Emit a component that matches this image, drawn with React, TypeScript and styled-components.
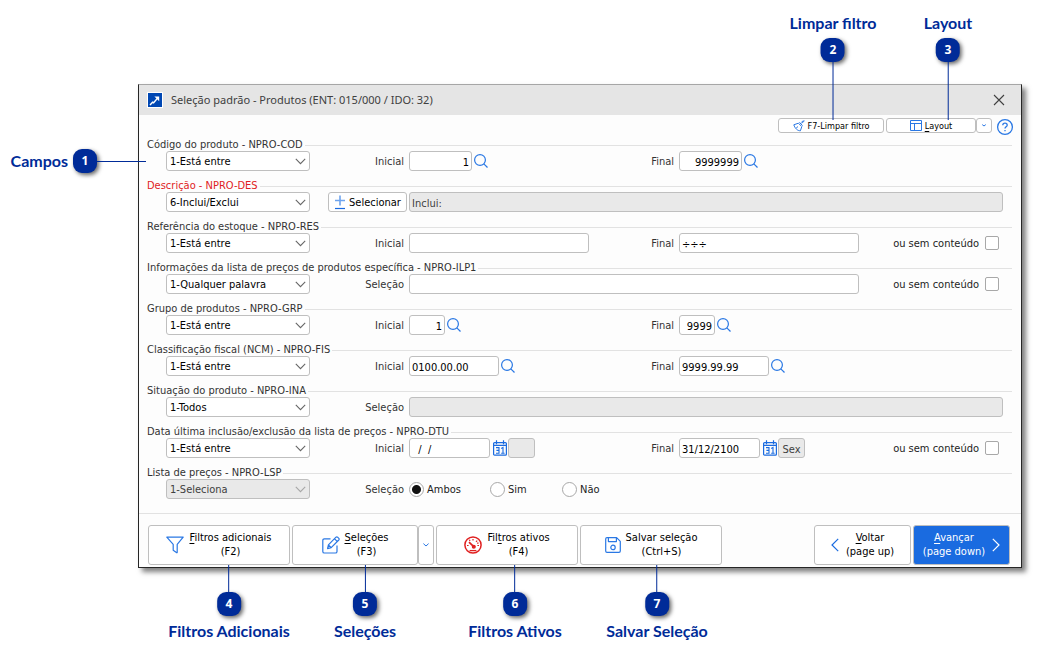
import React, { useId } from 'react';
import styled, { createGlobalStyle, css } from 'styled-components';

const navy = '#002b98';
const blue = '#1a6be0';
const edge = '#bfbfbf';

const GlobalStyle = createGlobalStyle`
  *, *::before, *::after { box-sizing: border-box; }
  body {
    margin: 0;
    background: #ffffff;
    color: #1c1c1c;
    font: 11px/14px 'DejaVu Sans Condensed', 'DejaVu Sans', sans-serif;
  }
  button, input, select { font: inherit; color: inherit; margin: 0; }
  u { text-underline-offset: 2px; }
`;

const Page = styled.main`
  min-width: 960px;
  padding: 84px 23px 90px 138px;
`;

const Dialog = styled.section`
  background: #fdfdfd;
  border: 1px solid #262626;
  border-top-color: #a6a6a6;
  box-shadow: 4px 4px 5px rgba(0, 0, 0, 0.5);
`;

const TitleBar = styled.header`
  display: flex;
  align-items: center;
  gap: 8px;
  height: 30px;
  padding: 0 16px 0 8px;
  background: #e5e5e5;
`;

const Title = styled.h1`
  flex: 1;
  margin: 0;
  font: 400 11px/16px 'Noto Sans', sans-serif;
  color: #404040;
`;

const PlainButton = styled.button`
  display: flex;
  padding: 0;
  border: 0;
  background: none;
`;

const Toolbar = styled.div`
  display: flex;
  align-items: flex-start;
  justify-content: flex-end;
  height: 23px;
  padding: 3px 7px 0 8px;
`;

const Anchor = styled.div`
  position: relative;
  display: flex;
`;

const SmallButton = styled.button<{ $width: number; $gap?: number }>`
  display: flex;
  align-items: center;
  justify-content: center;
  gap: 3px;
  width: ${p => p.$width}px;
  height: 15px;
  margin-right: ${p => p.$gap ?? 0}px;
  padding: 0;
  border: 1px solid ${edge};
  border-radius: 3px;
  background: #ffffff;
  font-size: 9px;
  line-height: 12px;
  color: #000000;
`;

const Group = styled.div`
  position: relative;
  height: 41px;
  padding-left: 8px;
`;

const GroupTitle = styled.div<{ $alert?: boolean }>`
  display: flex;
  align-items: center;
  gap: 2px;
  padding-right: 9px;
  line-height: 13px;
  color: ${p => (p.$alert ? '#e01b24' : '#333333')};
  &::after {
    content: '';
    flex: 1;
    height: 1px;
    margin-top: 2px;
    background: #e2e2e2;
  }
`;

const Row = styled.div`
  display: grid;
  grid-template-columns: 144px 99px 210px 60px 180px 1fr;
  align-items: center;
  height: 20px;
  padding: 0 18px 0 19px;
`;

const SelectBox = styled.div`
  position: relative;
  display: flex;
  svg {
    position: absolute;
    right: 4px;
    top: 7px;
    pointer-events: none;
  }
  select:disabled + svg { opacity: 0.5; }
`;

const Select = styled.select`
  appearance: none;
  width: 100%;
  height: 20px;
  padding: 2px 18px 0 3px;
  border: 1px solid ${edge};
  border-radius: 3px;
  background: #ffffff;
  color: #000000;
  &:disabled { background: #e9e9e9; color: #404040; opacity: 1; }
`;

const Label = styled.label`
  padding: 1px 5px 0 0;
  text-align: right;
  color: #333333;
`;

const Cell = styled.div<{ $span?: number }>`
  display: flex;
  align-items: center;
  grid-column: span ${p => p.$span ?? 1};
`;

const Input = styled.input<{ $width?: number; $right?: boolean }>`
  width: ${p => (p.$width ? `${p.$width}px` : '100%')};
  height: 20px;
  padding: 2px 2px 0;
  border: 1px solid ${edge};
  border-radius: 3px;
  background: #ffffff;
  color: #000000;
  text-align: ${p => (p.$right ? 'right' : 'left')};
  &:disabled { background: #e9e9e9; color: #404040; }
`;

const DayBox = styled(Input)`
  text-align: center;
`;

const IconButton = styled(PlainButton)`
  margin: 0 0 0 2px;
`;

const CalendarButton = styled(PlainButton)`
  margin: 0 1px 0 3px;
`;

const PickCell = styled(Cell)`
  padding-left: 18px;
`;

const PickButton = styled.button`
  display: flex;
  align-items: center;
  justify-content: center;
  gap: 3px;
  width: 79px;
  height: 20px;
  padding: 1px 0 0;
  border: 1px solid ${edge};
  border-radius: 3px;
  background: #ffffff;
  color: #000000;
`;

const EmptyOption = styled.label`
  display: flex;
  align-items: center;
  justify-content: flex-end;
  gap: 6px;
  grid-column: 6;
  padding-right: 4px;
  span { padding-top: 2px; }
`;

const Checkbox = styled.input`
  appearance: none;
  width: 14px;
  height: 14px;
  border: 1px solid #a8a8a8;
  border-radius: 2px;
  background: #ffffff;
`;

const RadioLabel = styled.label<{ $width: number }>`
  display: flex;
  align-items: center;
  gap: 3px;
  width: ${p => p.$width}px;
  span { padding-top: 2px; }
`;

const Radio = styled.input`
  appearance: none;
  flex: none;
  width: 15px;
  height: 15px;
  border: 1px solid #a8a8a8;
  border-radius: 50%;
  background: #ffffff;
  &:checked { background: radial-gradient(circle, #111111 4px, #ffffff 5px); }
`;

const Footer = styled.footer`
  display: flex;
  gap: 2px;
  margin-top: 6px;
  padding: 11px 11px 2px 9px;
  border-top: 1px solid #e2e2e2;
`;

const ActionButton = styled.button<{ $width: number; $primary?: boolean; $gap?: number }>`
  display: flex;
  align-items: center;
  justify-content: center;
  gap: ${p => p.$gap ?? 5}px;
  width: ${p => p.$width}px;
  height: 40px;
  padding: 0;
  border: 1px solid ${edge};
  border-radius: 3px;
  background: #ffffff;
  text-align: center;
  color: #000000;
  ${p => p.$primary && css`
    background: ${blue};
    color: #ffffff;
  `}
`;

const Navigation = styled.div`
  display: flex;
  gap: 2px;
  margin-left: auto;
`;

const CalloutBox = styled.div<{ $side: 'top' | 'bottom' | 'left'; $at: number }>`
  position: absolute;
  z-index: 1;
  display: flex;
  align-items: center;
  pointer-events: none;
  ${p => p.$side === 'top' && css`
    flex-direction: column;
    bottom: 13px;
    left: ${p.$at}px;
    transform: translateX(-50%);
  `}
  ${p => p.$side === 'bottom' && css`
    flex-direction: column-reverse;
    top: 100%;
    left: ${p.$at}px;
    transform: translateX(-50%);
  `}
  ${p => p.$side === 'left' && css`
    right: 100%;
    top: ${p.$at}px;
    margin-right: -7px;
  `}
`;

const CalloutText = styled.span<{ $side: string }>`
  margin: ${p => (p.$side === 'left' ? '0 5px 0 0' : p.$side === 'top' ? '0 0 5px' : '5px 0 0')};
  font: 700 16px/20px Lato, sans-serif;
  white-space: nowrap;
  color: ${navy};
`;

const Badge = styled.b`
  width: 24px;
  height: 24px;
  border-radius: 9px;
  background: ${navy};
  box-shadow: 2px 2px 4px rgba(0, 0, 0, 0.6);
  font: 700 12px/24px 'Noto Sans', sans-serif;
  text-align: center;
  color: #ffffff;
`;

const Leader = styled.i<{ $side: string }>`
  width: ${p => (p.$side === 'left' ? 49 : 1)}px;
  height: ${p => (p.$side === 'left' ? 1 : p.$side === 'top' ? 58 : 27)}px;
  background: ${navy};
`;

type Side = 'top' | 'bottom' | 'left';

function Callout({ n, text, side, at }: { n: number; text: string; side: Side; at: number }) {
  return (
    <CalloutBox $side={side} $at={at}>
      <CalloutText $side={side}>{text}</CalloutText>
      <Badge>{n}</Badge>
      <Leader $side={side} />
    </CalloutBox>
  );
}

const stroke = { fill: 'none', stroke: '#2a78e4', strokeWidth: 1.2 } as const;

const SearchIcon = () => (
  <svg width="14" height="14" viewBox="0 0 14 14" {...stroke}>
    <circle cx="6" cy="6" r="5.4" />
    <path d="M9.8 9.8 13.5 13.5" />
  </svg>
);

const CalendarIcon = () => (
  <svg width="14" height="16" viewBox="0 0 14 16" {...stroke} stroke={blue}>
    <rect x="0.6" y="2.6" width="12.8" height="12.6" rx="1" />
    <path d="M0.5 5.4h13M3.5 0.2v4M10.5 0.2v4" />
    <path d="M3 7.6h3v5.6H3M3.4 10.4H6M8.2 8.4 10 7.4v5.8M8.2 13.2h3.4" strokeWidth="1.1" />
  </svg>
);

const Chevron = () => (
  <svg width="11" height="7" viewBox="0 0 11 7" fill="none" stroke="#666666" strokeWidth="1.1">
    <path d="M0.8 0.9 5.5 5.6 10.2 0.9" />
  </svg>
);

const SmallChevron = () => (
  <svg width="6" height="4" viewBox="0 0 6 4" {...stroke} strokeWidth="1">
    <path d="M0.4 0.6 3 3 5.6 0.6" />
  </svg>
);

const TinyChevron = () => (
  <svg width="4" height="3" viewBox="0 0 4 3" {...stroke} strokeWidth="1">
    <path d="M0.2 0.6 2 2 3.8 0.6" />
  </svg>
);

const AppIcon = () => (
  <svg width="16" height="16" viewBox="0 0 16 16">
    <rect width="16" height="16" fill="#ffffff" />
    <rect x="1" y="1" width="14" height="14" fill="#0047b3" />
    <path d="M3 13 5.6 10.2 6.6 10.8 11 5.6" fill="none" stroke="#ffffff" strokeWidth="1.4" />
    <path d="M7.4 4.6H12.2V9.2Z" fill="#ffffff" />
  </svg>
);

const CloseIcon = () => (
  <svg width="12" height="12" viewBox="0 0 12 12" stroke="#404040" strokeWidth="1.1">
    <path d="M1 1 11 11M11 1 1 11" />
  </svg>
);

const BrushIcon = () => (
  <svg width="12" height="12" viewBox="0 0 12 12" {...stroke} strokeWidth="1">
    <path d="M11.6 0.6 8.8 3.4M10.4 0.4 8.2 2.6M6.4 2.4 9.6 5.6M5.4 3.2 8.8 6.6 7.4 10.8C4.4 10.8 2 8.4 0.8 4.8ZM3.2 8 5 6.6" />
  </svg>
);

const LayoutIcon = () => (
  <svg width="12" height="11" viewBox="0 0 12 11" {...stroke} strokeWidth="1">
    <path d="M0.5 0.5h11v10H0.5zM0.5 3.5h11M4.5 3.5v7" />
  </svg>
);

const HelpIcon = () => (
  <svg width="18" height="18" viewBox="0 0 18 18" {...stroke} strokeWidth="1.3">
    <circle cx="9" cy="9" r="7.4" />
    <path d="M6.8 7.3C6.8 5.9 7.7 5.2 9 5.2s2.2.8 2.2 2c0 1.6-2.2 1.7-2.2 3.4M9 11.9v1.4" />
  </svg>
);

const PlusMinusIcon = () => (
  <svg width="12" height="15" viewBox="0 0 12 15" {...stroke} strokeWidth="1.2">
    <path d="M1 5.5h10M6 0.5v10" stroke="#6ea4ee" strokeWidth="1.6" />
    <path d="M1 13.5h10" stroke={blue} />
  </svg>
);

const FunnelIcon = () => (
  <svg width="18" height="18" viewBox="0 0 18 18" {...stroke} strokeLinejoin="round">
    <path d="M0.8 1.2H17.2L11.2 8.4V16.2Q11.2 17 10.4 16.6L7.2 14.2V8.4Z" />
  </svg>
);

const EditIcon = () => (
  <svg width="18" height="18" viewBox="0 0 18 18" {...stroke} strokeLinejoin="round">
    <path d="M8.5 2.8H2.4Q0.8 2.8 0.8 4.4V15.4Q0.8 17 2.4 17H13.4Q15 17 15 15.4V9.6" />
    <path d="M5.6 12.6 6.4 8.8 14 1.2Q14.8 0.5 15.6 1.2L16.8 2.4Q17.5 3.2 16.8 4L9.2 11.6ZM12.6 2.8 15.4 5.6M6.4 8.8 9.2 11.6" />
  </svg>
);

const GaugeIcon = () => (
  <svg width="18" height="18" viewBox="0 0 18 18" fill="none" stroke="#e02020" strokeWidth="1.5">
    <circle cx="9" cy="9" r="8.1" />
    <path d="M5 6.2 9.2 10.2" strokeWidth="1.8" />
    <circle cx="9.8" cy="10.8" r="1.3" fill="#e02020" />
    <path d="M5.6 14.6h6.8" strokeWidth="1.3" />
    <path d="M3 9.5h1.6M13.4 9.5H15M9 3v1.6M12 5.8 13.2 4.6M5.4 3.8l.6 1.2M13.2 7.4l1.3-.5" strokeWidth="1.2" />
  </svg>
);

const SaveIcon = () => (
  <svg width="16" height="16" viewBox="0 0 16 16" {...stroke} strokeLinejoin="round">
    <path d="M2 0.7H11.6L15.3 4.4V14Q15.3 15.3 14 15.3H2Q0.7 15.3 0.7 14V2Q0.7 0.7 2 0.7ZM3.4 0.7V4.6H11.4V0.7" />
    <circle cx="8" cy="10.4" r="2.2" />
  </svg>
);

const ArrowIcon = ({ next }: { next?: boolean }) => (
  <svg width="8" height="14" viewBox="0 0 8 14" fill="none" stroke={next ? '#ffffff' : blue} strokeWidth="1.2">
    <path d={next ? 'M0.8 0.8 7 7 0.8 13.2' : 'M7.2 0.8 1 7 7.2 13.2'} />
  </svg>
);

function Operator({ value, disabled, label }: { value: string; disabled?: boolean; label: string }) {
  return (
    <SelectBox>
      <Select defaultValue={value} disabled={disabled} aria-label={label}>
        <option>{value}</option>
      </Select>
      <Chevron />
    </SelectBox>
  );
}

type Kind = 'search' | 'date' | 'plain';

function Field({ label, value, width, right, kind = 'plain', day = '', span, disabled }: {
  label: string; value: string; width?: number; right?: boolean; kind?: Kind; day?: string; span?: number; disabled?: boolean;
}) {
  const id = useId();
  return (
    <>
      <Label htmlFor={id}>{label}</Label>
      <Cell $span={span}>
        <Input id={id} defaultValue={value} $width={width} $right={right} disabled={disabled} />
        {kind === 'search' && <IconButton aria-label="Pesquisar"><SearchIcon /></IconButton>}
        {kind === 'date' && (
          <>
            <CalendarButton aria-label="Calendário"><CalendarIcon /></CalendarButton>
            <DayBox $width={27} defaultValue={day} disabled aria-label="Dia da semana" />
          </>
        )}
      </Cell>
    </>
  );
}

const Empty = () => (
  <EmptyOption><span>ou sem conteúdo</span><Checkbox type="checkbox" /></EmptyOption>
);

function FilterGroup({ title, operator, alert, disabled, callout, children }: {
  title: string; operator: string; alert?: boolean; disabled?: boolean; callout?: React.ReactNode; children: React.ReactNode;
}) {
  return (
    <Group role="group" aria-label={title}>
      {callout}
      <GroupTitle $alert={alert}>{title}</GroupTitle>
      <Row>
        <Operator value={operator} disabled={disabled} label={title} />
        {children}
      </Row>
    </Group>
  );
}

export default function App() {
  return (
    <Page>
      <GlobalStyle />
      <Dialog>
        <TitleBar>
          <AppIcon />
          <Title>Seleção padrão - Produtos (ENT: 015/000 / IDO: 32)</Title>
          <PlainButton aria-label="Fechar"><CloseIcon /></PlainButton>
        </TitleBar>

        <Toolbar>
          <Anchor>
            <SmallButton $width={106} $gap={2}><BrushIcon />F7-Limpar filtro</SmallButton>
            <Callout n={2} text="Limpar filtro" side="top" at={55} />
          </Anchor>
          <Anchor>
            <SmallButton $width={90}><LayoutIcon /><span><u>L</u>ayout</span></SmallButton>
            <SmallButton $width={16} $gap={4} aria-label="Mais layouts"><TinyChevron /></SmallButton>
            <Callout n={3} text="Layout" side="top" at={62} />
          </Anchor>
          <PlainButton aria-label="Ajuda"><HelpIcon /></PlainButton>
        </Toolbar>

        <FilterGroup
          title="Código do produto - NPRO-COD"
          operator="1-Está entre"
          callout={<Callout n={1} text="Campos" side="left" at={11} />}
        >
          <Field label="Inicial" value="1" width={63} right kind="search" />
          <Field label="Final" value="9999999" width={63} right kind="search" />
        </FilterGroup>

        <FilterGroup title="Descrição - NPRO-DES" operator="6-Inclui/Exclui" alert>
          <PickCell>
            <PickButton><PlusMinusIcon />Selecionar</PickButton>
          </PickCell>
          <Cell $span={4}>
            <Input defaultValue="Inclui:" disabled aria-label="Descrição" />
          </Cell>
        </FilterGroup>

        <FilterGroup title="Referência do estoque - NPRO-RES" operator="1-Está entre">
          <Field label="Inicial" value="" width={180} />
          <Field label="Final" value="÷÷÷" width={180} />
          <Empty />
        </FilterGroup>

        <FilterGroup title="Informações da lista de preços de produtos específica - NPRO-ILP1" operator="1-Qualquer palavra">
          <Field label="Seleção" value="" span={3} />
          <Empty />
        </FilterGroup>

        <FilterGroup title="Grupo de produtos - NPRO-GRP" operator="1-Está entre">
          <Field label="Inicial" value="1" width={36} right kind="search" />
          <Field label="Final" value="9999" width={36} right kind="search" />
        </FilterGroup>

        <FilterGroup title="Classificação fiscal (NCM) - NPRO-FIS" operator="1-Está entre">
          <Field label="Inicial" value="0100.00.00" width={90} kind="search" />
          <Field label="Final" value="9999.99.99" width={90} kind="search" />
        </FilterGroup>

        <FilterGroup title="Situação do produto - NPRO-INA" operator="1-Todos">
          <Field label="Seleção" value="" span={4} disabled />
        </FilterGroup>

        <FilterGroup title="Data última inclusão/exclusão da lista de preços - NPRO-DTU" operator="1-Está entre">
          <Field label="Inicial" value="  /  /" width={81} kind="date" />
          <Field label="Final" value="31/12/2100" width={81} kind="date" day="Sex" />
          <Empty />
        </FilterGroup>

        <FilterGroup title="Lista de preços - NPRO-LSP" operator="1-Seleciona" disabled>
          <Label as="span">Seleção</Label>
          <Cell $span={4}>
            <RadioLabel $width={81}><Radio type="radio" name="lista" defaultChecked /><span>Ambos</span></RadioLabel>
            <RadioLabel $width={72}><Radio type="radio" name="lista" /><span>Sim</span></RadioLabel>
            <RadioLabel $width={72}><Radio type="radio" name="lista" /><span>Não</span></RadioLabel>
          </Cell>
        </FilterGroup>

        <Footer>
          <Anchor>
            <ActionButton $width={142}>
              <FunnelIcon /><span><u>F</u>iltros adicionais<br />(F2)</span>
            </ActionButton>
            <Callout n={4} text="Filtros Adicionais" side="bottom" at={81} />
          </Anchor>
          <Anchor>
            <ActionButton $width={126}>
              <EditIcon /><span><u>S</u>eleções<br />(F3)</span>
            </ActionButton>
            <ActionButton $width={16} aria-label="Mais seleções"><SmallChevron /></ActionButton>
            <Callout n={5} text="Seleções" side="bottom" at={73} />
          </Anchor>
          <Anchor>
            <ActionButton $width={142}>
              <GaugeIcon /><span>Fil<u>t</u>ros ativos<br />(F4)</span>
            </ActionButton>
            <Callout n={6} text="Filtros Ativos" side="bottom" at={79} />
          </Anchor>
          <Anchor>
            <ActionButton $width={142}>
              <SaveIcon /><span>Salvar seleção<br />(Ctrl+S)</span>
            </ActionButton>
            <Callout n={7} text="Salvar Seleção" side="bottom" at={77} />
          </Anchor>
          <Navigation>
            <ActionButton $width={97} $gap={7}>
              <ArrowIcon /><span><u>V</u>oltar<br />(page up)</span>
            </ActionButton>
            <ActionButton $width={97} $gap={7} $primary>
              <span><u>A</u>vançar<br />(page down)</span><ArrowIcon next />
            </ActionButton>
          </Navigation>
        </Footer>
      </Dialog>
    </Page>
  );
}
